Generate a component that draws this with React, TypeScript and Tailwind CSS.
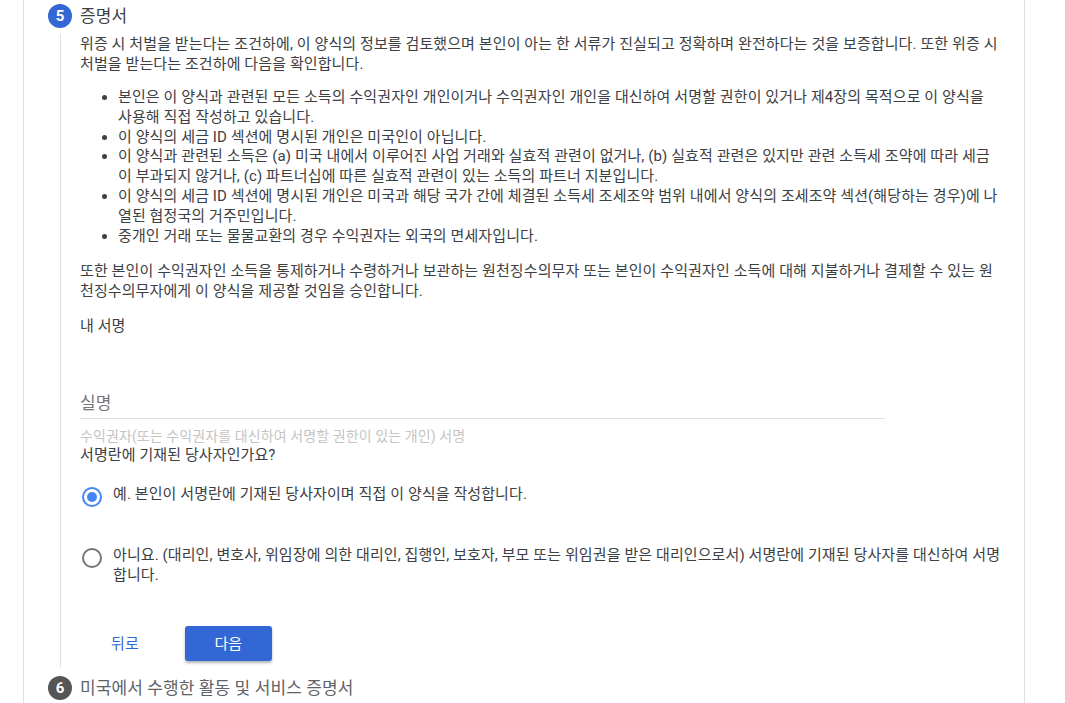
export default function App() {
  const bullets = [
    "본인은 이 양식과 관련된 모든 소득의 수익권자인 개인이거나 수익권자인 개인을 대신하여 서명할 권한이 있거나 제4장의 목적으로 이 양식을 사용해 직접 작성하고 있습니다.",
    "이 양식의 세금 ID 섹션에 명시된 개인은 미국인이 아닙니다.",
    "이 양식과 관련된 소득은 (a) 미국 내에서 이루어진 사업 거래와 실효적 관련이 없거나, (b) 실효적 관련은 있지만 관련 소득세 조약에 따라 세금이 부과되지 않거나, (c) 파트너십에 따른 실효적 관련이 있는 소득의 파트너 지분입니다.",
    "이 양식의 세금 ID 섹션에 명시된 개인은 미국과 해당 국가 간에 체결된 소득세 조세조약 범위 내에서 양식의 조세조약 섹션(해당하는 경우)에 나열된 협정국의 거주민입니다.",
    "중개인 거래 또는 물물교환의 경우 수익권자는 외국의 면세자입니다.",
  ];

  return (
    <div
      className="min-h-[703px] w-full bg-white text-[15px] leading-[20px] tracking-[0.1px] text-[#3c4043]"
      style={{ fontFamily: 'Roboto, "Noto Sans CJK KR", sans-serif' }}
    >
      <div className="ml-[23px] h-[703px] w-[1002px] overflow-hidden border-x border-[#e0e0e0] pl-[24px] pt-[4px]">
        {/* step 5 header */}
        <div className="flex items-center gap-2">
          <div className="flex h-6 w-6 items-center justify-center rounded-full bg-[#3367d6] text-[15px] font-bold text-white">
            5
          </div>
          <span className="text-[17px] leading-6 text-[#3c4043]">증명서</span>
        </div>

        {/* step 5 body */}
        <div className="ml-[12px] mt-[6px] border-l border-[#e0e0e0] pl-[19px] pb-[6px]">
          <div className="w-[918px]">
            <p>
              위증 시 처벌을 받는다는 조건하에, 이 양식의 정보를 검토했으며 본인이 아는 한 서류가 진실되고 정확하며 완전하다는 것을 보증합니다. 또한 위증 시
              처벌을 받는다는 조건하에 다음을 확인합니다.
            </p>

            <ul className="mt-[14px] list-disc pl-[38px] leading-[19.8px]">
              {bullets.map((b) => (
                <li key={b}>{b}</li>
              ))}
            </ul>

            <p className="mt-[15px]">
              또한 본인이 수익권자인 소득을 통제하거나 수령하거나 보관하는 원천징수의무자 또는 본인이 수익권자인 소득에 대해 지불하거나 결제할 수 있는 원천징수의무자에게 이 양식을 제공할 것임을 승인합니다.
            </p>

            <p className="mt-[15px]">내 서명</p>
          </div>

          {/* signature field */}
          <div className="mt-[55px] w-[805px]">
            <div className="border-b border-[#e0e0e0] pb-[3px] text-[17px] leading-6 text-[#757575]">실명</div>
            <div className="mt-[9px] text-[14px] leading-4 text-[#c4c4c4]">
              수익권자(또는 수익권자를 대신하여 서명할 권한이 있는 개인) 서명
            </div>
          </div>

          <p className="mt-px">서명란에 기재된 당사자인가요?</p>

          {/* radios */}
          <div className="mt-[19px] flex w-[925px] items-start gap-[11px] pl-[2px]">
            <span className="mt-[3px] flex h-5 w-5 shrink-0 items-center justify-center rounded-full border-2 border-[#4285f4]">
              <span className="h-[10px] w-[10px] rounded-full bg-[#4285f4]" />
            </span>
            <span>예. 본인이 서명란에 기재된 당사자이며 직접 이 양식을 작성합니다.</span>
          </div>

          <div className="mt-[38px] flex w-[928px] items-start gap-[11px] pl-[2px]">
            <span className="mt-[3px] h-5 w-5 shrink-0 rounded-full border-2 border-[#757575]" />
            <span>
              아니요. (대리인, 변호사, 위임장에 의한 대리인, 집행인, 보호자, 부모 또는 위임권을 받은 대리인으로서) 서명란에 기재된 당사자를 대신하여 서명합니다.
            </span>
          </div>

          {/* actions */}
          <div className="mt-[41px] flex items-center">
            <button className="ml-[22px] h-[35px] px-[9px] text-[15px] text-[#3367d6]">뒤로</button>
            <button className="ml-[37px] h-[35px] w-[87px] rounded-[3px] bg-[#3367d6] text-[15px] text-white shadow-[0_2px_3px_rgba(0,0,0,0.3)]">
              다음
            </button>
          </div>
        </div>

        {/* step 6 header */}
        <div className="mt-[9px] flex items-center gap-2">
          <div className="flex h-6 w-6 items-center justify-center rounded-full bg-[#555555] text-[15px] font-bold text-white">
            6
          </div>
          <span className="text-[17px] leading-6 text-[#5f6368]">미국에서 수행한 활동 및 서비스 증명서</span>
        </div>
      </div>
    </div>
  );
}
